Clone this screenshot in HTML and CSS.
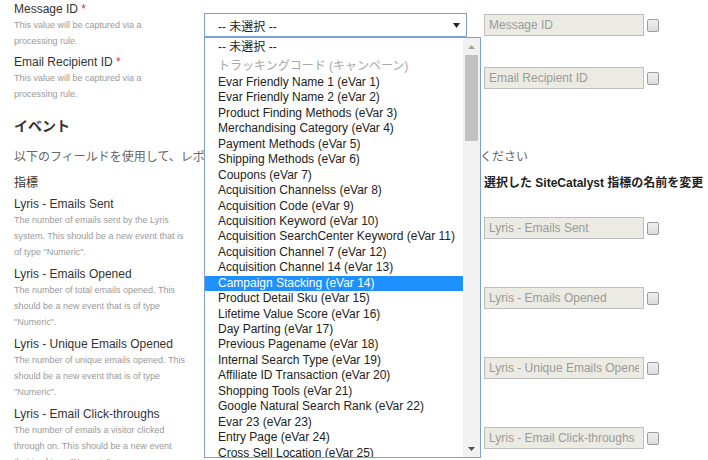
FILE: index.html
```html
<!DOCTYPE html>
<html lang="ja">
<head>
<meta charset="utf-8">
<title>Lyris</title>
<link rel="stylesheet" href="styles.css">
</head>
<body>
<main class="page">
  <section class="fields">
    <div class="row">
      <div class="info">
        <div class="label">Message ID <span class="req">*</span></div>
        <div class="desc">This value will be captured via a processing rule.</div>
      </div>
      <div class="mid">
        <div class="select focused">
          <span class="sel-text">-- 未選択 --</span>
          <svg class="arrow" width="7" height="5" viewBox="0 0 7 5"><polygon points="0,0 7,0 3.5,5" fill="#222"/></svg>
          <div class="listbox">
            <div class="options">
              <div class="opt jp">-- 未選択 --</div>
              <div class="opt jp disabled">トラッキングコード (キャンペーン)</div>
              <div class="opt">Evar Friendly Name 1 (eVar 1)</div>
              <div class="opt">Evar Friendly Name 2 (eVar 2)</div>
              <div class="opt">Product Finding Methods (eVar 3)</div>
              <div class="opt">Merchandising Category (eVar 4)</div>
              <div class="opt">Payment Methods (eVar 5)</div>
              <div class="opt">Shipping Methods (eVar 6)</div>
              <div class="opt">Coupons (eVar 7)</div>
              <div class="opt">Acquisition Channelss (eVar 8)</div>
              <div class="opt">Acquisition Code (eVar 9)</div>
              <div class="opt">Acquisition Keyword (eVar 10)</div>
              <div class="opt">Acquisition SearchCenter Keyword (eVar 11)</div>
              <div class="opt">Acquisition Channel 7 (eVar 12)</div>
              <div class="opt">Acquisition Channel 14 (eVar 13)</div>
              <div class="opt selected">Campaign Stacking (eVar 14)</div>
              <div class="opt">Product Detail Sku (eVar 15)</div>
              <div class="opt">Lifetime Value Score (eVar 16)</div>
              <div class="opt">Day Parting (eVar 17)</div>
              <div class="opt">Previous Pagename (eVar 18)</div>
              <div class="opt">Internal Search Type (eVar 19)</div>
              <div class="opt">Affiliate ID Transaction (eVar 20)</div>
              <div class="opt">Shopping Tools (eVar 21)</div>
              <div class="opt">Google Natural Search Rank (eVar 22)</div>
              <div class="opt">Evar 23 (eVar 23)</div>
              <div class="opt">Entry Page (eVar 24)</div>
              <div class="opt">Cross Sell Location (eVar 25)</div>
              <div class="opt">Evar 26 (eVar 26)</div>
            </div>
            <div class="scrollbar">
              <div class="sb-btn"><svg width="7" height="4" viewBox="0 0 7 4"><polygon points="0,4 7,4 3.5,0" fill="#a3a3a3"/></svg></div>
              <div class="sb-thumb"></div>
              <div class="sb-btn sb-down"><svg width="7" height="4" viewBox="0 0 7 4"><polygon points="0,0 7,0 3.5,4" fill="#505050"/></svg></div>
            </div>
          </div>
        </div>
      </div>
      <div class="right">
        <input class="field" type="text" disabled value="Message ID">
        <input class="check" type="checkbox" disabled>
      </div>
    </div>

    <div class="row">
      <div class="info">
        <div class="label">Email Recipient ID <span class="req">*</span></div>
        <div class="desc">This value will be captured via a processing rule.</div>
      </div>
      <div class="mid">
        <div class="select"><span class="sel-text">-- 未選択 --</span></div>
      </div>
      <div class="right">
        <input class="field" type="text" disabled value="Email Recipient ID">
        <input class="check" type="checkbox" disabled>
      </div>
    </div>
  </section>

  <h2 class="heading">イベント</h2>
  <p class="intro">以下のフィールドを使用して、レポートに表示されるイベント指標の表示名を変更してください</p>

  <div class="row head">
    <div class="th">指標</div>
    <div class="th"></div>
    <div class="th strong">選択した SiteCatalyst 指標の名前を変更</div>
  </div>

  <section class="metrics">
    <div class="row">
      <div class="info">
        <div class="label">Lyris - Emails Sent</div>
        <div class="desc">The number of emails sent by the Lyris system. This should be a new event that is of type "Numeric".</div>
      </div>
      <div class="mid"><div class="select"><span class="sel-text">-- 未選択 --</span></div></div>
      <div class="right">
        <input class="field" type="text" disabled value="Lyris - Emails Sent">
        <input class="check" type="checkbox" disabled>
      </div>
    </div>
    <div class="row">
      <div class="info">
        <div class="label">Lyris - Emails Opened</div>
        <div class="desc">The number of total emails opened. This should be a new event that is of type "Numeric".</div>
      </div>
      <div class="mid"><div class="select"><span class="sel-text">-- 未選択 --</span></div></div>
      <div class="right">
        <input class="field" type="text" disabled value="Lyris - Emails Opened">
        <input class="check" type="checkbox" disabled>
      </div>
    </div>
    <div class="row">
      <div class="info">
        <div class="label">Lyris - Unique Emails Opened</div>
        <div class="desc">The number of unique emails opened. This should be a new event that is of type "Numeric".</div>
      </div>
      <div class="mid"><div class="select"><span class="sel-text">-- 未選択 --</span></div></div>
      <div class="right">
        <input class="field" type="text" disabled value="Lyris - Unique Emails Opened">
        <input class="check" type="checkbox" disabled>
      </div>
    </div>
    <div class="row">
      <div class="info">
        <div class="label">Lyris - Email Click-throughs</div>
        <div class="desc">The number of emails a visitor clicked through on. This should be a new event that is of type "Numeric".</div>
      </div>
      <div class="mid"><div class="select"><span class="sel-text">-- 未選択 --</span></div></div>
      <div class="right">
        <input class="field" type="text" disabled value="Lyris - Email Click-throughs">
        <input class="check" type="checkbox" disabled>
      </div>
    </div>
  </section>
</main>
</body>
</html>
```

FILE: styles.css
```css
html, body {
  margin: 0;
  overflow: hidden;
  background: #fff;
}
body {
  font-family: "Liberation Sans", Arial, "Noto Sans CJK JP", sans-serif;
  color: #333;
}
.page {
  padding: 1px 0 0 14px;
}
.fields {
  display: flex;
  flex-direction: column;
  gap: 5px;
}
.row {
  display: grid;
  grid-template-columns: 190px 280px auto;
  align-items: center;
}
.label {
  font-size: 12px;
  line-height: 16px;
  color: #333;
  white-space: nowrap;
}
.req {
  color: #e0304a;
}
.desc {
  font-size: 9px;
  line-height: 16px;
  color: #9a9a9a;
  width: 173px;
}
.select {
  position: relative;
  width: 263px;
  height: 24px;
  box-sizing: border-box;
  border: 1px solid #a9a9a9;
  display: flex;
  align-items: center;
  padding: 0 6px 0 13px;
  font-size: 12px;
  color: #222;
  background: #fff;
}
.select.focused {
  border-color: #7a9fdc;
}
.arrow {
  margin-left: auto;
  display: block;
}
.listbox {
  position: absolute;
  left: -1px;
  top: calc(100% + 1px);
  width: 277px;
  height: 421px;
  box-sizing: border-box;
  border: 1px solid #7a9fdc;
  background: #fff;
  display: flex;
  overflow: hidden;
  z-index: 10;
}
.options {
  flex: 1;
  display: flex;
  flex-direction: column;
  overflow: hidden;
}
.opt {
  flex: none;
  height: 15.45px;
  line-height: 15.45px;
  padding-left: 13px;
  font-size: 12px;
  color: #222;
  white-space: nowrap;
}
.opt.jp {
  height: 18.5px;
  line-height: 18.5px;
}
.opt.disabled {
  color: #a8a8a8;
}
.opt.selected {
  background: #1e90ff;
  color: #fff;
}
.scrollbar {
  width: 17px;
  flex: none;
  background: #f1f1f1;
  display: flex;
  flex-direction: column;
  align-items: center;
}
.sb-btn {
  height: 17px;
  width: 17px;
  display: flex;
  align-items: center;
  justify-content: center;
}
.sb-btn svg {
  display: block;
}
.sb-thumb {
  width: 13px;
  height: 86px;
  background: #c1c1c1;
}
.sb-down {
  margin-top: auto;
}
.right {
  display: flex;
  align-items: center;
  gap: 3px;
}
.field {
  width: 160px;
  height: 22px;
  box-sizing: border-box;
  margin: 0;
  padding: 0 4px;
  border: 1px solid #bdbdbd;
  border-radius: 0;
  background: #ebebe4;
  color: #9a9a9a;
  font-family: "Liberation Sans", Arial, sans-serif;
  font-size: 12px;
  outline: none;
}
.check {
  appearance: none;
  -webkit-appearance: none;
  width: 12px;
  height: 13px;
  box-sizing: border-box;
  margin: 0;
  border: 1px solid #9c9c9c;
  border-radius: 2px;
  background: linear-gradient(#efefef, #dcdcdc);
}
.heading {
  margin: 14px 0 0;
  font-size: 14px;
  line-height: 20px;
  font-weight: bold;
  color: #333;
}
.intro {
  margin: 13px 0 0;
  font-size: 12px;
  line-height: 16px;
  color: #666;
  white-space: nowrap;
}
.head {
  margin-top: 10px;
}
.th {
  font-size: 12px;
  line-height: 16px;
  color: #333;
  white-space: nowrap;
}
.th.strong {
  font-weight: bold;
  color: #222;
}
.metrics {
  margin-top: 5px;
  display: flex;
  flex-direction: column;
  gap: 6px;
}
```
